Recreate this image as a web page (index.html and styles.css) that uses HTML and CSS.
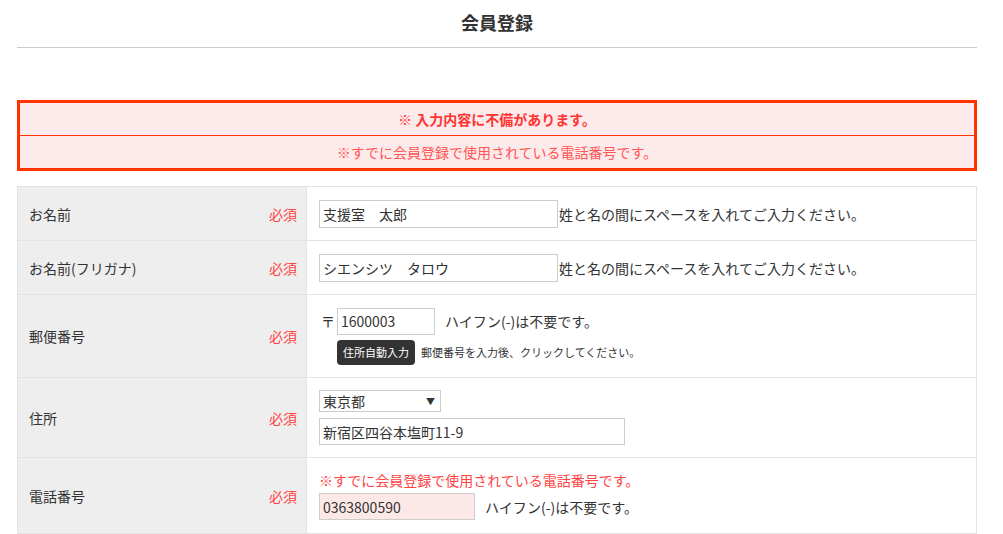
FILE: index.html
```html
<!DOCTYPE html>
<html lang="ja">
  <head>
    <meta charset="UTF-8" />
    <title>会員登録</title>
    <link rel="stylesheet" href="styles.css">
  </head>
  <body>
    <div class="Wrap">
      <h1 class="PageTitle">会員登録</h1>

      <div class="ErrorBox">
        <p class="ErrorHead">※ 入力内容に不備があります。</p>
        <p class="ErrorItem">※すでに会員登録で使用されている電話番号です。</p>
      </div>

      <table class="Form">
        <tr class="row-name">
          <th><span>お名前</span><em class="Required">必須</em></th>
          <td>
            <input class="Text name" type="text" value="支援室　太郎" /><span class="Note">姓と名の間にスペースを入れてご入力ください。</span>
          </td>
        </tr>
        <tr class="row-name">
          <th><span>お名前(フリガナ)</span><em class="Required">必須</em></th>
          <td>
            <input class="Text name" type="text" value="シエンシツ　タロウ" /><span class="Note">姓と名の間にスペースを入れてご入力ください。</span>
          </td>
        </tr>
        <tr class="row-zip">
          <th><span>郵便番号</span><em class="Required">必須</em></th>
          <td>
            <div class="Line">
              <span class="Mark">〒</span><input class="Text zip" type="text" value="1600003" /><span class="Note gap">ハイフン(-)は不要です。</span>
            </div>
            <div class="Line second">
              <button class="AutoBtn" type="button">住所自動入力</button><span class="Small">郵便番号を入力後、クリックしてください。</span>
            </div>
          </td>
        </tr>
        <tr class="row-addr">
          <th><span>住所</span><em class="Required">必須</em></th>
          <td>
            <div class="Select">
              <span>東京都</span><span class="Arrow">▼</span>
            </div>
            <input class="Text addr" type="text" value="新宿区四谷本塩町11-9" />
          </td>
        </tr>
        <tr class="row-tel">
          <th><span>電話番号</span><em class="Required">必須</em></th>
          <td>
            <p class="FieldError">※すでに会員登録で使用されている電話番号です。</p>
            <input class="Text tel Invalid" type="text" value="0363800590" /><span class="Note gap">ハイフン(-)は不要です。</span>
          </td>
        </tr>
      </table>
    </div>
  </body>
</html>
```

FILE: styles.css
```css
* {
  box-sizing: border-box;
}
body {
  margin: 0;
  font-family: "Noto Sans CJK JP", "Noto Sans", sans-serif;
  font-size: 14px;
  color: #333;
  background: #fff;
}
.Wrap {
  width: 960px;
  margin-left: 17px;
}
.PageTitle {
  margin: 0;
  padding: 10px 0 13px;
  font-size: 18px;
  line-height: 24px;
  text-align: center;
  color: #333;
  border-bottom: 1px solid #ccc;
}
.ErrorBox {
  margin-top: 52px;
  border: 3px solid #ff3300;
  background-color: #fdeaea;
  text-align: center;
  color: #f33;
}
.ErrorBox p {
  margin: 0;
  line-height: 16px;
}
.ErrorHead {
  padding: 8px 0 8px;
  font-weight: bold;
  border-bottom: 1px solid #ff3300;
}
.ErrorItem {
  padding: 8px 0 8px;
  color: #f55;
}
.Form {
  width: 960px;
  margin-top: 15px;
  border-collapse: collapse;
}
.Form th,
.Form td {
  border: 1px solid #e3e3e3;
  vertical-align: middle;
}
.Form th {
  width: 289px;
  padding: 0 9px 0 11px;
  background-color: #eee;
  font-weight: normal;
  text-align: left;
}
.Form th span {
  float: left;
}
.Form td {
  padding: 0 12px;
}
.Required {
  float: right;
  font-style: normal;
  color: #f44;
}
.row-name {
  height: 54px;
}
.row-zip {
  height: 83px;
}
.row-addr {
  height: 80px;
}
.row-tel {
  height: 76px;
}
.Text {
  height: 28px;
  padding: 0 3px;
  border: 1px solid #ccc;
  font-family: inherit;
  font-size: 14px;
  color: #333;
  vertical-align: middle;
  background: #fff;
}
.name {
  width: 239px;
}
.zip {
  width: 98px;
  height: 27px;
}
.addr {
  display: block;
  width: 306px;
  height: 27px;
  margin-top: 6px;
}
.tel {
  width: 156px;
  height: 27px;
}
.Invalid {
  background-color: #fde8e8;
}
.Note {
  vertical-align: middle;
  margin-left: 1px;
}
.Note.gap {
  margin-left: 10px;
}
.Mark {
  display: inline-block;
  width: 18px;
  padding-left: 2px;
  vertical-align: middle;
}
.Line.second {
  margin-top: 5px;
  padding-left: 18px;
}
.AutoBtn {
  height: 25px;
  padding: 0 6px;
  border: none;
  border-radius: 4px;
  background-color: #333;
  color: #fff;
  font-family: inherit;
  font-size: 11px;
  vertical-align: middle;
}
.Small {
  margin-left: 6px;
  font-size: 11px;
  vertical-align: middle;
}
.Select {
  display: flex;
  justify-content: space-between;
  align-items: center;
  width: 122px;
  height: 22px;
  padding: 0 5px 0 3px;
  border: 1px solid #ccc;
}
.Arrow {
  font-size: 9px;
}
.FieldError {
  margin: 0 0 4px;
  color: #f44;
  line-height: 18px;
}
```
